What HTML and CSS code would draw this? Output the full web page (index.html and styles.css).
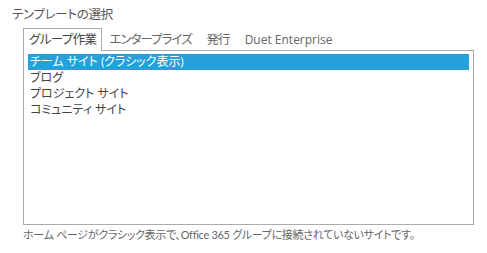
FILE: index.html
```html
<!DOCTYPE html>
<html lang="ja">
<head>
<meta charset="utf-8">
<link rel="stylesheet" href="styles.css">
</head>
<body>
<div class="page">
  <div class="title">テンプレートの選択</div>
  <div class="tabs">
    <div class="tab active">グループ作業</div>
    <div class="tab">エンタープライズ</div>
    <div class="tab">発行</div>
    <div class="tab latin">Duet Enterprise</div>
  </div>
  <div class="listbox">
    <div class="item selected">チーム サイト (クラシック表示)</div>
    <div class="item">ブログ</div>
    <div class="item">プロジェクト サイト</div>
    <div class="item">コミュニティ サイト</div>
  </div>
  <div class="desc">ホーム ページがクラシック表示で、Office 365 グループに接続されていないサイトです。</div>
</div>
</body>
</html>
```
FILE: styles.css
```css
html, body {
  margin: 0;
  padding: 0;
  background: #fff;
}
body {
  font-family: "Lato", "Noto Sans CJK JP", sans-serif;
  font-feature-settings: "palt";
  color: #444;
}
.page {
  padding-top: 6px;
}
.title {
  margin-left: 12px;
  font-size: 12.5px;
  letter-spacing: -0.3px;
  line-height: 18px;
  color: #555;
}
.tabs {
  display: flex;
  margin-left: 23px;
  margin-top: 4px;
  align-items: flex-end;
}
.tab {
  font-size: 12.5px;
  letter-spacing: -1px;
  line-height: 21px;
  padding: 0 6px 0 7px;
  border: 1px solid transparent;
  border-bottom: none;
  color: #666;
  white-space: nowrap;
}
.tab.latin {
  font-family: "Open Sans", "Noto Sans CJK JP", sans-serif;
  font-size: 12px;
  letter-spacing: 0;
}
.tab.active {
  padding: 0 4px 0 5px;
  letter-spacing: -0.6px;
  border-color: #ababab;
  background: #fff;
  color: #444;
  margin-bottom: -1px;
  position: relative;
  z-index: 1;
  height: 22px;
}
.listbox {
  margin-left: 23px;
  height: 170px;
  width: 441px;
  border: 1px solid #ababab;
  padding: 3px 4px 0 4px;
}
.item {
  font-size: 12px;
  line-height: 16px;
  height: 16px;
  padding-left: 2px;
  color: #444;
  white-space: nowrap;
  overflow: hidden;
}
.item.selected {
  background: #26a0da;
  color: #fff;
}
.desc {
  margin-left: 23px;
  margin-top: 3px;
  font-size: 11px;
  letter-spacing: -0.3px;
  line-height: 14px;
  color: #666;
}
```
